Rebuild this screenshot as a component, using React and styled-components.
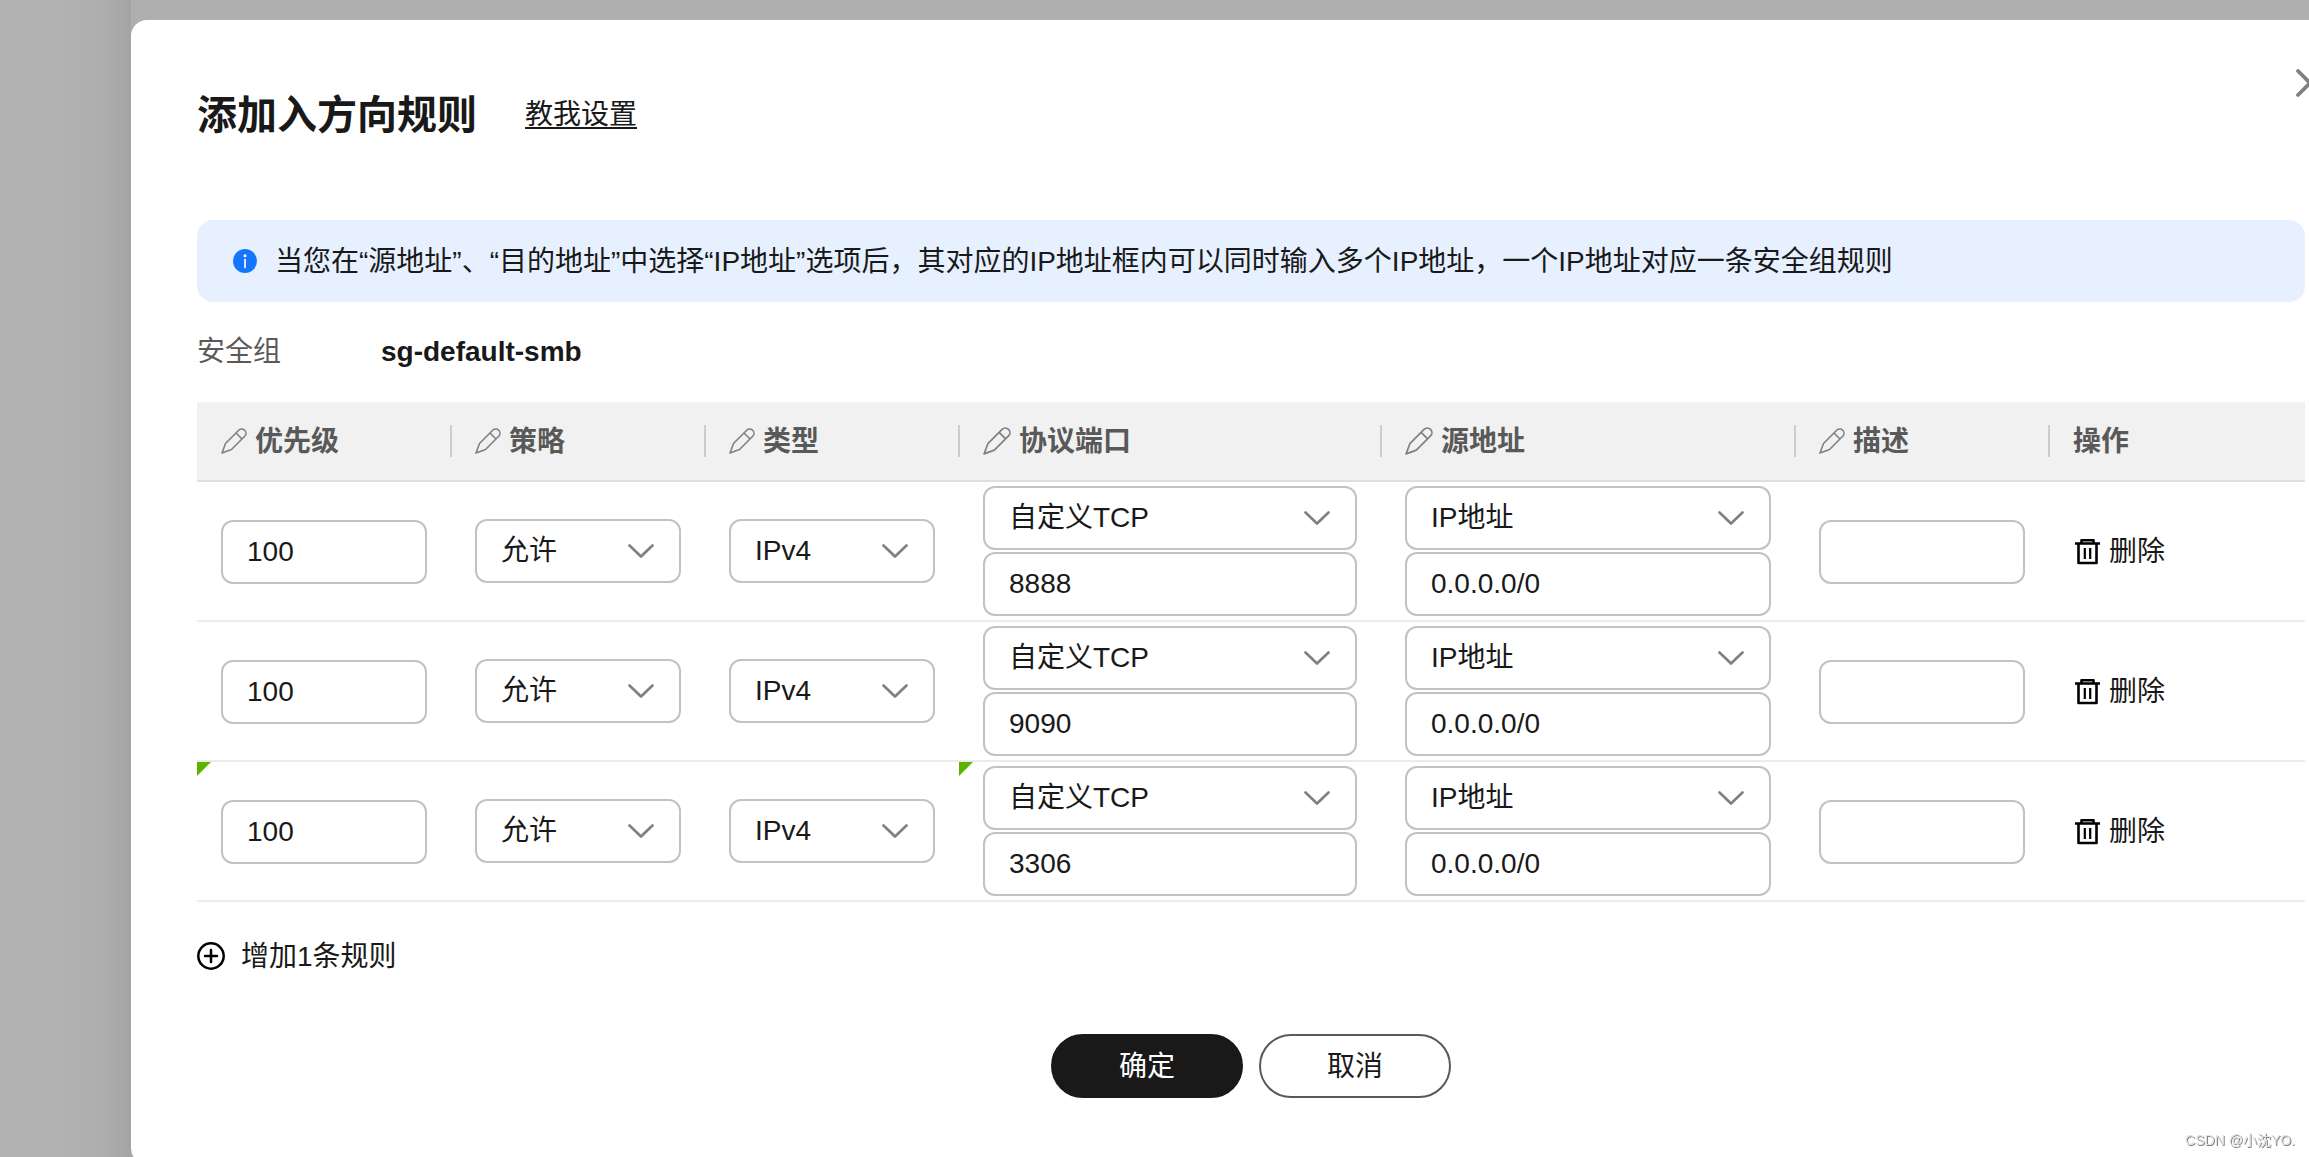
import React, { useState } from 'react';
import styled, { createGlobalStyle, css } from 'styled-components';

const GlobalStyle = createGlobalStyle`
  *, *::before, *::after { box-sizing: border-box; }
  html, body { margin: 0; height: 100%; }
  #root { height: 100%; }
  body {
    background: #b2b2b2;
    color: #191919;
    font-family: "Liberation Sans", Arial, "Noto Sans CJK SC", sans-serif;
    font-size: 28px;
    line-height: 42px;
    overflow: hidden;
  }
  button, input, select { font: inherit; color: inherit; }
`;

const Backdrop = styled.div`
  height: 100%;
  padding: 20px 0 0 131px;
  overflow: hidden;
  background: linear-gradient(to right, #b2b2b2 64px, #adadad 104px, #a4a4a4 131px, #afafaf 131px);
`;

const Dialog = styled.section`
  position: relative;
  min-height: 1144px;
  margin-right: -62px;
  padding: 64px 66px 66px;
  background: #fff;
  border-radius: 16px;
`;

const CloseButton = styled.button`
  position: absolute;
  top: 47px;
  right: 45px;
  width: 32px;
  height: 32px;
  padding: 0;
  border: 0;
  background: none;
  color: #808080;
  cursor: pointer;
  svg { display: block; }
`;

const Text = styled.span`
  padding-top: 2px;
`;

const Header = styled.header`
  display: flex;
  align-items: center;
  gap: 48px;
  height: 60px;
  margin-bottom: 76px;
  padding-top: 2px;
`;

const Title = styled.h1`
  margin: 0;
  font-size: 40px;
  line-height: 60px;
  font-weight: 700;
`;

const GuideLink = styled.a`
  color: inherit;
  text-decoration: underline;
  text-decoration-thickness: 2px;
  text-underline-offset: 3px;
`;

const Notice = styled.p`
  display: flex;
  align-items: center;
  gap: 18px;
  height: 82px;
  margin: 0 0 29px;
  padding: 0 36px;
  border-radius: 16px;
  background: #e6f0ff;
`;

const GroupInfo = styled.dl`
  display: flex;
  margin: 0 0 29px;
  dt { width: 184px; color: #595959; }
  dd { margin: 0; font-weight: 700; }
`;

const RuleTable = styled.table`
  width: 100%;
  table-layout: fixed;
  border-collapse: separate;
  border-spacing: 0;
`;

const HeadRow = styled.tr`
  background: #f1f1f1;
`;

const HeadCell = styled.th`
  height: 80px;
  padding: 0;
  border-bottom: 2px solid #dfdfdf;
  color: #595959;
  text-align: left;
`;

const HeadLabel = styled.div`
  display: flex;
  align-items: center;
  gap: 8px;
  height: 32px;
  margin-right: -1px;
  padding-left: 24px;
  border-right: ${(p) => (p.$last ? '0' : '2px solid #cccccc')};
`;

const Cell = styled.td`
  position: relative;
  height: 140px;
  padding: ${(p) => (p.$single ? '6px' : '4px')} 24px 4px;
  border-bottom: 2px solid #ebebeb;
  ${(p) => p.$changed && css`
    &::before {
      content: "";
      position: absolute;
      top: 0;
      left: 0;
      border-top: 14px solid #5cb300;
      border-right: 14px solid transparent;
    }
  `}
`;

const Stack = styled.div`
  display: grid;
  gap: 2px;
`;

const field = css`
  display: block;
  width: 100%;
  height: 64px;
  padding: 0 24px;
  border: 2px solid #c2c2c2;
  border-radius: 12px;
  background: #fff;
  outline: none;
  &:focus { border-color: #595959; }
`;

const TextField = styled.input`${field}`;

const SelectBox = styled.div`
  display: grid;
  align-items: center;
  & > * { grid-area: 1 / 1; }
  & > svg { justify-self: end; margin-right: 26px; pointer-events: none; }
`;

const NativeSelect = styled.select`
  ${field}
  appearance: none;
`;

const IconButton = styled.button`
  display: flex;
  align-items: center;
  gap: ${(p) => p.$gap}px;
  padding: 0;
  border: 0;
  background: none;
  cursor: pointer;
`;

const AddBar = styled.div`
  margin: 32px 0 56px;
`;

const Footer = styled.footer`
  display: flex;
  justify-content: center;
  gap: 16px;
`;

const PillButton = styled.button`
  width: 192px;
  height: 64px;
  padding: 2px 0 0;
  border: 2px solid ${(p) => (p.$primary ? '#191919' : '#595959')};
  border-radius: 32px;
  background: ${(p) => (p.$primary ? '#191919' : '#fff')};
  color: ${(p) => (p.$primary ? '#fff' : '#191919')};
  cursor: pointer;
`;

const Watermark = styled.small`
  position: fixed;
  right: 14px;
  bottom: 7px;
  color: #e2e2e2;
  font-size: 14px;
  line-height: 20px;
  text-shadow: 1px 1px 0 #808080;
`;

const PencilIcon = ({ size }) => (
  <svg width={size} height={size} viewBox="0 0 26 26" fill="none" stroke="#808080" strokeWidth="1.6" strokeLinejoin="round" aria-hidden="true">
    <path d="M1 25 4.5 15.5 17.7 2.3a4.2 4.2 0 0 1 6 6L10.5 21.5Z" />
    <path d="m15 5 6 6" />
  </svg>
);

const ChevronIcon = () => (
  <svg width="28" height="28" viewBox="0 0 28 28" fill="none" stroke="#808080" strokeWidth="2.7" strokeLinecap="round" strokeLinejoin="round" aria-hidden="true">
    <path d="M2.5 8.5 14 19.5 25.5 8.5" />
  </svg>
);

const TrashIcon = () => (
  <svg width="28" height="28" viewBox="0 0 28 28" fill="none" stroke="#000" strokeWidth="2.6" strokeLinejoin="round" aria-hidden="true">
    <path d="M2 6.5h25M8.5 6V3.200h12V6M5.500 7v19h18V7" />
    <path d="M11.800 11v11M17.200 11v11" strokeWidth="2.2" />
  </svg>
);

const PlusIcon = () => (
  <svg width="28" height="28" viewBox="0 0 28 28" fill="none" stroke="#000" strokeWidth="2.5" strokeLinecap="round" aria-hidden="true">
    <circle cx="14" cy="14" r="12.7" />
    <path d="M14 8v12M8 14h12" />
  </svg>
);

const InfoIcon = () => (
  <svg width="24" height="24" viewBox="0 0 24 24" aria-hidden="true">
    <circle cx="12" cy="12" r="12" fill="#1476ff" />
    <circle cx="12" cy="6.800" r="1.500" fill="#fff" />
    <path d="M12 10.500v8" stroke="#fff" strokeWidth="1.700" strokeLinecap="round" />
  </svg>
);

const CloseIcon = () => (
  <svg width="32" height="32" viewBox="0 0 32 32" fill="none" stroke="currentColor" strokeWidth="3.800" strokeLinecap="round" aria-hidden="true">
    <path d="m4 4 24 24M28 4 4 28" />
  </svg>
);

const columns = [
  { id: 'priority', label: '优先级', width: 254, icon: 26 },
  { id: 'policy', label: '策略', width: 254, icon: 26 },
  { id: 'type', label: '类型', width: 254, icon: 26 },
  { id: 'protocol', label: '协议端口', width: 422, icon: 28 },
  { id: 'source', label: '源地址', width: 414, icon: 28 },
  { id: 'description', label: '描述', width: 254, icon: 26 },
  { id: 'action', label: '操作' },
];

const initialRules = [
  { key: 1, port: '8888' },
  { key: 2, port: '9090' },
  { key: 3, port: '3306', changed: true },
];

function Select({ labelledBy, options }) {
  return (
    <SelectBox>
      <NativeSelect aria-labelledby={labelledBy}>
        {options.map((o) => <option key={o}>{o}</option>)}
      </NativeSelect>
      <ChevronIcon />
    </SelectBox>
  );
}

function RuleRow({ rule, onRemove }) {
  return (
    <tr>
      <Cell $single $changed={rule.changed}><TextField aria-labelledby="priority" defaultValue="100" /></Cell>
      <Cell><Select labelledBy="policy" options={['允许']} /></Cell>
      <Cell><Select labelledBy="type" options={['IPv4']} /></Cell>
      <Cell $changed={rule.changed}>
        <Stack>
          <Select labelledBy="protocol" options={['自定义TCP']} />
          <TextField aria-labelledby="protocol" defaultValue={rule.port} />
        </Stack>
      </Cell>
      <Cell>
        <Stack>
          <Select labelledBy="source" options={['IP地址']} />
          <TextField aria-labelledby="source" defaultValue="0.0.0.0/0" />
        </Stack>
      </Cell>
      <Cell $single><TextField aria-labelledby="description" /></Cell>
      <Cell>
        <IconButton type="button" $gap={8} onClick={onRemove}><TrashIcon /><Text>删除</Text></IconButton>
      </Cell>
    </tr>
  );
}

export default function App() {
  const [rules, setRules] = useState(initialRules);
  const addRule = () => setRules([...rules, { key: Date.now(), port: '' }]);
  const removeRule = (key) => setRules(rules.filter((r) => r.key !== key));

  return (
    <>
      <GlobalStyle />
      <Backdrop>
        <Dialog role="dialog" aria-labelledby="dialog-title">
          <Header>
            <Title id="dialog-title">添加入方向规则</Title>
            <GuideLink href="#guide">教我设置</GuideLink>
          </Header>
          <CloseButton type="button" aria-label="关闭"><CloseIcon /></CloseButton>
          <Notice>
            <InfoIcon />
            <Text>当您在“源地址”、“目的地址”中选择“IP地址”选项后，其对应的IP地址框内可以同时输入多个IP地址，一个IP地址对应一条安全组规则</Text>
          </Notice>
          <GroupInfo>
            <dt>安全组</dt>
            <dd>sg-default-smb</dd>
          </GroupInfo>
          <RuleTable>
            <colgroup>
              {columns.map((c) => <col key={c.id} width={c.width} />)}
            </colgroup>
            <thead>
              <HeadRow>
                {columns.map((c) => (
                  <HeadCell key={c.id} id={c.id} scope="col">
                    <HeadLabel $last={!c.icon}>
                      {c.icon && <PencilIcon size={c.icon} />}
                      <Text>{c.label}</Text>
                    </HeadLabel>
                  </HeadCell>
                ))}
              </HeadRow>
            </thead>
            <tbody>
              {rules.map((r) => <RuleRow key={r.key} rule={r} onRemove={() => removeRule(r.key)} />)}
            </tbody>
          </RuleTable>
          <AddBar>
            <IconButton type="button" $gap={16} onClick={addRule}><PlusIcon /><Text>增加1条规则</Text></IconButton>
          </AddBar>
          <Footer>
            <PillButton type="button" $primary>确定</PillButton>
            <PillButton type="button">取消</PillButton>
          </Footer>
        </Dialog>
      </Backdrop>
      <Watermark>CSDN @小沈YO.</Watermark>
    </>
  );
}
